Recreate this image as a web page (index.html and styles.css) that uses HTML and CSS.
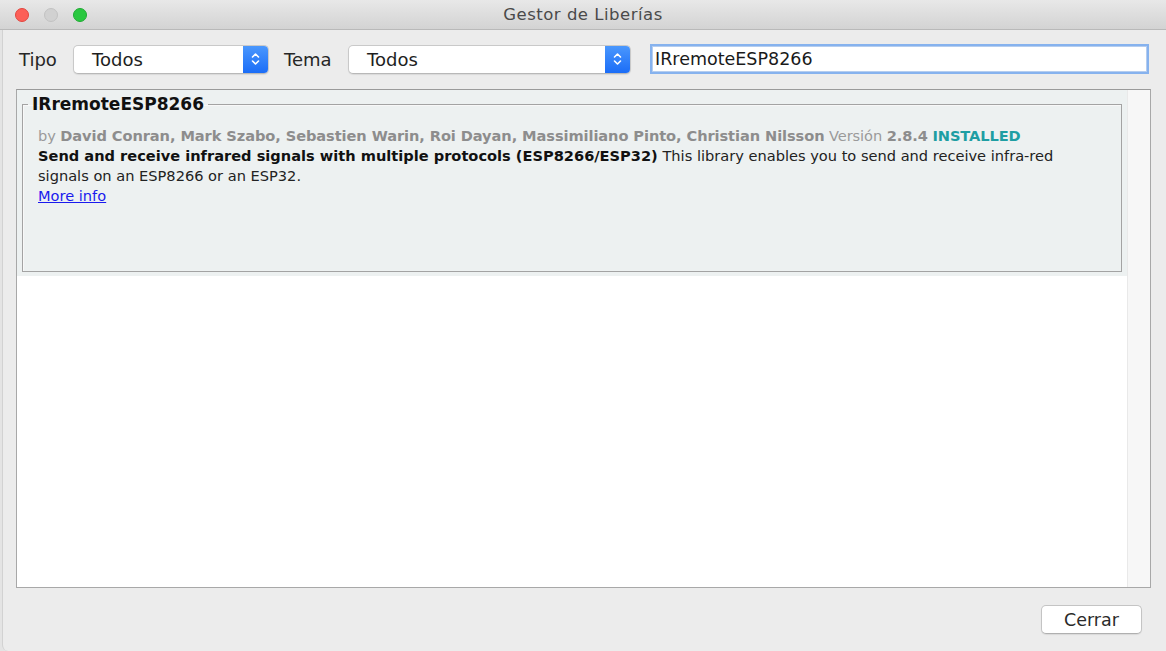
FILE: index.html
```html
<!DOCTYPE html>
<html lang="es">
<head>
<meta charset="utf-8">
<title>Gestor de Liberías</title>
<link rel="stylesheet" href="styles.css">
</head>
<body>
<div class="window">
  <header class="titlebar">
    <div class="lights">
      <span class="light red"></span>
      <span class="light grey"></span>
      <span class="light green"></span>
    </div>
    <div class="title">Gestor de Liberías</div>
  </header>
  <div class="body">
    <div class="toolbar">
      <span class="label">Tipo</span>
      <div class="select sel1">
        <span class="sel-text">Todos</span>
        <span class="stepper"><svg width="11" height="16" viewBox="0 0 11 16"><path d="M2.5 6 L5.5 3 L8.5 6 M2.5 10 L5.5 13 L8.5 10" fill="none" stroke="#fff" stroke-width="1.6" stroke-linecap="round" stroke-linejoin="round"/></svg></span>
      </div>
      <span class="label label2">Tema</span>
      <div class="select sel2">
        <span class="sel-text">Todos</span>
        <span class="stepper"><svg width="11" height="16" viewBox="0 0 11 16"><path d="M2.5 6 L5.5 3 L8.5 6 M2.5 10 L5.5 13 L8.5 10" fill="none" stroke="#fff" stroke-width="1.6" stroke-linecap="round" stroke-linejoin="round"/></svg></span>
      </div>
      <div class="search">IRremoteESP8266</div>
    </div>
    <div class="list">
      <div class="list-content">
        <div class="item">
          <fieldset class="card">
            <legend>IRremoteESP8266</legend>
            <p class="line meta">by <b>David Conran, Mark Szabo, Sebastien Warin, Roi Dayan, Massimiliano Pinto, Christian Nilsson</b> Versión <b>2.8.4</b> <b class="installed">INSTALLED</b></p>
            <p class="line desc"><b>Send and receive infrared signals with multiple protocols (ESP8266/ESP32)</b> This library enables you to send and receive infra-red<br>signals on an ESP8266 or an ESP32.</p>
            <p class="line"><a class="more" href="#">More info</a></p>
          </fieldset>
        </div>
      </div>
      <div class="scrollbar"></div>
    </div>
    <div class="footer">
      <button class="btn">Cerrar</button>
    </div>
  </div>
</div>
</body>
</html>
```

FILE: styles.css
```css
* { box-sizing: border-box; }
html, body {
  margin: 0;
  padding: 0;
  width: 1166px;
  height: 651px;
  overflow: hidden;
  background: #e4e4e4;
  font-family: "DejaVu Sans", "Liberation Sans", sans-serif;
}
.window {
  display: flex;
  flex-direction: column;
  height: 651px;
}
.titlebar {
  height: 30px;
  flex: none;
  display: flex;
  align-items: center;
  background: linear-gradient(#e8e8e8, #d3d3d3);
  border-bottom: 1px solid #b9b9b9;
  padding-left: 15px;
}
.lights {
  display: flex;
  gap: 15px;
  width: 0;
}
.light {
  flex: none;
  width: 14px;
  height: 14px;
  border-radius: 50%;
}
.light.red { background: #fc5f57; border: 1px solid #e2463f; }
.light.grey { background: #d1d1d1; border: 1px solid #c2c2c2; }
.light.green { background: #2ac840; border: 1px solid #1faa33; }
.title {
  flex: 1;
  text-align: center;
  font-size: 16.5px;
  letter-spacing: 0.5px;
  color: #4a4a4a;
  padding-right: 15px;
}
.body {
  flex: 1;
  display: flex;
  flex-direction: column;
  background: #ececec;
  margin-left: 2px;
  border-left: 1px solid #d2d2d2;
  border-bottom-left-radius: 6px;
  min-height: 0;
}
.toolbar {
  display: flex;
  align-items: center;
  padding: 14px 17px 0 16px;
  height: 44px;
}
.label {
  font-size: 18px;
  color: #262626;
  width: 54px;
}
.label2 { margin-left: 15px; width: 64px; }
.select {
  height: 29px;
  display: flex;
  align-items: stretch;
  background: #fff;
  border: 1px solid #c9c9c9;
  border-bottom-color: #b8b8b8;
  border-radius: 5px;
  box-shadow: 0 1px 1px rgba(0,0,0,0.08);
  overflow: hidden;
}
.sel1 { width: 196px; }
.sel2 { width: 283px; }
.sel-text {
  flex: 1;
  font-size: 18px;
  color: #1e1e1e;
  padding-left: 18px;
  line-height: 27px;
}
.stepper {
  width: 25px;
  flex: none;
  background: linear-gradient(#4a97fd, #1b6df7);
  display: flex;
  align-items: center;
  justify-content: center;
}
.search {
  flex: 1;
  margin-left: 19px;
  height: 30px;
  background: #fff;
  border: 2px solid #86b2ee;
  box-shadow: inset 0 0 0 1px #b5cdef;
  font-size: 17.5px;
  color: #1a1a1a;
  padding-left: 3px;
  line-height: 26px;
}
.list {
  margin: 15px 15px 0 13px;
  height: 499px;
  flex: none;
  display: flex;
  background: #fff;
  border: 1px solid #a8a8a8;
  border-top-color: #9a9a9a;
}
.list-content {
  flex: 1;
  background: #fff;
}
.item {
  background: #edf1f1;
  padding: 4px 5px 4px 5px;
  height: 186px;
}
.card {
  margin: 0;
  height: 178px;
  border: 1px solid #a3a3a3;
  box-shadow: inset 1px 1px 0 #f8f8f8;
  padding: 12px 14px 0 15px;
}
.card legend {
  font-weight: bold;
  font-size: 17px;
  color: #111;
  padding: 0 4px;
  margin-left: -10px;
  line-height: 20px;
}
.line {
  margin: 0;
  font-size: 14.6px;
  line-height: 20px;
  color: #222;
}
.meta { color: #9a9a9a; letter-spacing: -0.08px; }
.meta b { color: #8d8d8d; }
.meta b.installed { color: #1e9ea3; }
.desc b { color: #111; }
.more {
  color: #1a1aee;
  text-decoration: underline;
}
.scrollbar {
  width: 23px;
  flex: none;
  background: #f7f7f7;
  border-left: 1px solid #e9e9e9;
}
.footer {
  display: flex;
  justify-content: flex-end;
  padding: 17px 24px 0 0;
}
.btn {
  width: 101px;
  height: 29px;
  background: #fff;
  border: 1px solid #c4c4c4;
  border-bottom-color: #b0b0b0;
  border-radius: 5px;
  box-shadow: 0 1px 1px rgba(0,0,0,0.08);
  font-family: "DejaVu Sans", sans-serif;
  font-size: 17.5px;
  color: #2a2a2a;
  padding: 0;
}
```
